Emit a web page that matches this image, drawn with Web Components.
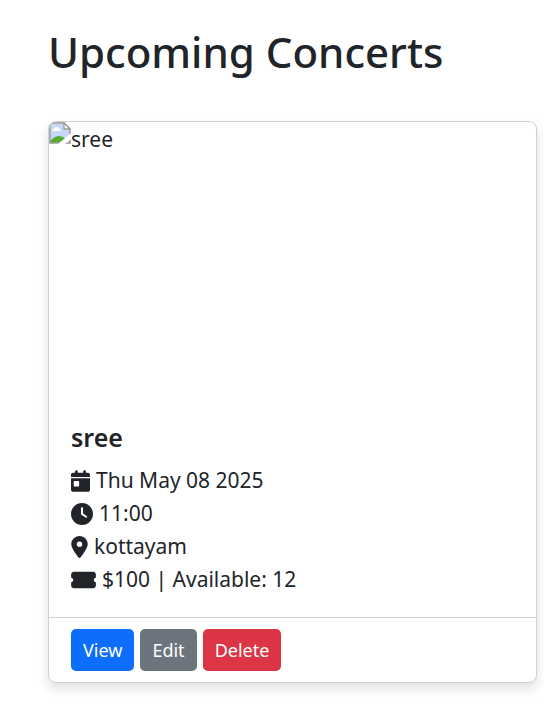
<!DOCTYPE html>
<html lang="en">
<head>
<meta charset="utf-8">
<meta name="viewport" content="width=device-width, initial-scale=1">
<title>Upcoming Concerts</title>
<style>
body { margin: 0; background: #fff; color: #212529; font: 21px/33px "Segoe UI", "Noto Sans", "Open Sans", sans-serif; }
</style>
</head>
<body>
<concert-page heading="Upcoming Concerts">
  <concert-card name="sree">
    <concert-detail icon="calendar">Thu May 08 2025</concert-detail>
    <concert-detail icon="clock">11:00</concert-detail>
    <concert-detail icon="location">kottayam</concert-detail>
    <concert-detail icon="ticket">$100 | Available: 12</concert-detail>
    <action-button slot="actions" variant="primary">View</action-button>
    <action-button slot="actions" variant="secondary">Edit</action-button>
    <action-button slot="actions" variant="danger">Delete</action-button>
  </concert-card>
</concert-page>
<script>
class ConcertPage extends HTMLElement {
  constructor() {
    super();
    this.attachShadow({ mode: "open" }).innerHTML = `
      <style>
        :host { display: block; }
        main { padding: 25px 7px 20px 48px; }
        h1 { margin: 0 0 43px; font-size: 42px; line-height: 53px; font-weight: 500; }
      </style>
      <main><h1></h1><slot></slot></main>`;
    this.shadowRoot.querySelector("h1").textContent = this.getAttribute("heading");
  }
}

class ConcertCard extends HTMLElement {
  constructor() {
    super();
    this.attachShadow({ mode: "open" }).innerHTML = `
      <style>
        :host { display: block; }
        article { display: flex; flex-direction: column; overflow: hidden; background: #fff; border: 1px solid #d0d0d1; border-radius: 8px; box-shadow: 0 6px 12px rgba(0,0,0,.12); }
        .cover { display: flex; align-items: flex-start; height: 275px; }
        .cover svg { flex: none; display: block; }
        .cover span { line-height: 35px; }
        .body { padding: 24px 22px 21px; }
        h2 { margin: 0 0 10px; font-size: 25px; line-height: 33px; font-weight: 600; }
        footer { display: flex; gap: 6px; padding: 11px 22px; border-top: 1px solid #d0d0d1; }
      </style>
      <article>
        <div class="cover">
          <svg width="22" height="22" viewBox="0 0 22 22" aria-hidden="true">
            <path d="M1 1H15L21 7V21H1Z" fill="#c6d8f7"/>
            <path d="M3 9Q3 7 5 7Q6 4 8 5Q10 5 10 7Q12 7 12 9Z" fill="#fff"/>
            <path d="M1 21V19Q6 14 10 14Q14 14 17 17V21Z" fill="#54ad35"/>
            <path d="M1 21V1H15L21 7V21Z" fill="none" stroke="#9b9b9b" stroke-width="1.5"/>
            <path d="M15 1V7H21Z" fill="#fff" stroke="#9b9b9b" stroke-width="1.3"/>
            <path d="M9 22L22 11V17L16 22Z" fill="#fff"/>
          </svg>
          <span></span>
        </div>
        <div class="body"><h2></h2><slot></slot></div>
        <footer><slot name="actions"></slot></footer>
      </article>`;
    const name = this.getAttribute("name");
    this.shadowRoot.querySelector("span").textContent = name;
    this.shadowRoot.querySelector("h2").textContent = name;
  }
}

const ICONS = {
  calendar: [448, 19, "M128 0c17.7 0 32 14.3 32 32V64H288V32c0-17.700 14.300-32 32-32s32 14.300 32 32V64h48c26.500 0 48 21.500 48 48v48H0V112C0 85.500 21.500 64 48 64H96V32c0-17.700 14.300-32 32-32zM0 192H448V464c0 26.500-21.500 48-48 48H48c-26.500 0-48-21.500-48-48V192zm80 64c-8.800 0-16 7.200-16 16v96c0 8.800 7.200 16 16 16h96c8.800 0 16-7.200 16-16V272c0-8.800-7.200-16-16-16H80z"],
  clock: [512, 22, "M256 0a256 256 0 1 1 0 512A256 256 0 1 1 256 0zM232 120V256c0 8 4 15.500 10.700 20l96 64c11 7.400 25.900 4.400 33.300-6.700s4.400-25.900-6.700-33.300L280 243.200V120c0-13.300-10.700-24-24-24s-24 10.700-24 24z"],
  location: [384, 17, "M215.700 499.200C267 435 384 279.400 384 192C384 86 298 0 192 0S0 86 0 192c0 87.400 117 243 168.300 307.200c12.300 15.300 35.100 15.300 47.400 0zM192 128a64 64 0 1 1 0 128 64 64 0 1 1 0-128z"],
  ticket: [576, 25, "M0 128C0 92.700 28.700 64 64 64H512c35.300 0 64 28.700 64 64v64c0 8.800-7.400 15.700-15.700 18.600C541.500 217.100 528 235 528 256s13.500 38.900 32.300 45.400c8.300 2.900 15.700 9.800 15.700 18.600v64c0 35.300-28.700 64-64 64H64c-35.300 0-64-28.700-64-64V320c0-8.800 7.400-15.700 15.700-18.600C34.500 294.900 48 277 48 256s-13.500-38.900-32.300-45.400C7.400 207.700 0 200.800 0 192V128z"]
};

class ConcertDetail extends HTMLElement {
  constructor() {
    super();
    const [box, width, path] = ICONS[this.getAttribute("icon")];
    this.attachShadow({ mode: "open" }).innerHTML = `
      <style>
        :host { display: flex; align-items: center; gap: 6px; }
        svg { flex: none; }
      </style>
      <svg width="${width}" height="22" viewBox="0 0 ${box} 512" fill="currentColor" aria-hidden="true"><path fill-rule="evenodd" d="${path}"/></svg>
      <span><slot></slot></span>`;
  }
}

class ActionButton extends HTMLElement {
  constructor() {
    super();
    this.attachShadow({ mode: "open" }).innerHTML = `
      <style>
        :host { display: block; --fill: #0d6efd; }
        :host([variant="secondary"]) { --fill: #6c757d; }
        :host([variant="danger"]) { --fill: #dc3545; }
        button { display: block; margin: 0; padding: 6px 12px; border: 0; border-radius: 5px; background: var(--fill); color: #fff; font: inherit; font-size: 18px; line-height: 30px; cursor: pointer; }
      </style>
      <button type="button"><slot></slot></button>`;
  }
}

customElements.define("concert-page", ConcertPage);
customElements.define("concert-card", ConcertCard);
customElements.define("concert-detail", ConcertDetail);
customElements.define("action-button", ActionButton);
</script>
</body>
</html>
